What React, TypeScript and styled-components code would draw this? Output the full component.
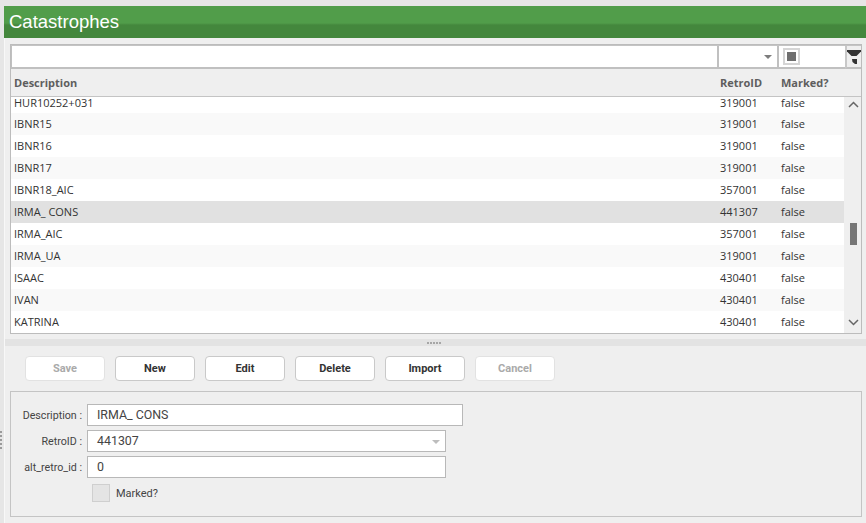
import React from "react";
import styled, { createGlobalStyle } from "styled-components";

const Global = createGlobalStyle`
  html, body { margin: 0; padding: 0; background: #e6e6e6; width: 866px; height: 523px; overflow: hidden; }
  * { box-sizing: border-box; }
`;
const Page = styled.div`
  width: 866px; height: 523px; padding: 6px 0 0 4px; display: flex; flex-direction: column; background: #e6e6e6; position: relative;
`;
const Title = styled.h1`
  margin: 0; height: 32px; flex: none; padding: 0 0 0 5px; color: #fff;
  font: 400 18.5px/31px "Liberation Sans", Arial, sans-serif;
  background: linear-gradient(#519d4a 0, #519d4a 17px, #44873d 19px, #44873d 100%);
`;
const Body = styled.div`
  flex: 1; display: flex; flex-direction: column; background: #efefef; border-left: 1px solid #f8f8f8;
`;
const GridWrap = styled.div`
  margin: 6px 4px 0 5px; height: 290px; flex: none; border: 1px solid #bcbcbc; background: #efefef; display: flex; flex-direction: column;
`;
const FilterRow = styled.div`
  display: grid; grid-template-columns: 708px 60px 66px 16px; height: 24px; flex: none; background: #fff;
  border-top: 1px solid #c4c4c4;
`;
const FilterCell = styled.div<{ $plain?: boolean }>`
  position: relative; background: #fff; display: flex; align-items: center;
  border-bottom: 2px solid #c0c0c0;
  border-right: ${p => p.$plain ? "none" : "2px solid #c0c0c0"};
  &:first-child { border-left: 1px solid #c0c0c0; }
`;
const FilterBtn = styled.div`
  background: #efefef; border-bottom: 2px solid #c0c0c0; border-left: 2px solid #c8c8c8; display: flex; justify-content: flex-start; align-items: flex-start; padding: 4px 0 0 0;
`;
const Caret = styled.span<{ $light?: boolean }>`
  position: absolute; right: 5px; top: 9px; width: 0; height: 0;
  border-left: 4px solid transparent; border-right: 4px solid transparent;
  border-top: 4px solid ${p => p.$light ? "#bdbdbd" : "#7d7d7d"};
`;
const TriBox = styled.span`
  width: 17px; height: 17px; margin: 0 0 0 4px; border: 2px solid #d5d5d5; background: #fff; display: flex; align-items: center; justify-content: center;
  &::after { content: ""; width: 9px; height: 9px; background: #6f6f6f; }
`;
const cols = "grid-template-columns: 706px 61px 1fr;";
const HeadRow = styled.div`
  display: grid; ${cols} height: 28px; flex: none; align-items: center; background: #efefef; border-bottom: 1px solid #c4c4c4;
`;
const HeadCell = styled.div`
  font: 700 11px "Open Sans", sans-serif; color: #5e5e5e; padding-left: 3px;
`;
const ListArea = styled.div`
  flex: 1; display: flex; min-height: 0;
`;
const Rows = styled.div`
  width: 833px; overflow: hidden; background: #fff;
`;
const Row = styled.div<{ $sel?: boolean; $alt?: boolean; $h?: number }>`
  display: grid; ${cols} height: ${p => p.$h ?? 22}px; align-items: ${p => p.$h ? "start" : "center"};
  line-height: ${p => p.$h ? 12 : 14}px;
  background: ${p => p.$sel ? "#e1e1e1" : p.$alt ? "#f9f9f9" : "#fff"};
`;
const Cell = styled.div`
  font: 400 11px "Open Sans", sans-serif; line-height: inherit; color: #333; padding-left: 3px; white-space: nowrap;
`;
const Track = styled.div`
  flex: 1; background: #efefef; display: flex; flex-direction: column; align-items: center; padding: 4px 0 0 1px;
`;
const Thumb = styled.div`
  width: 7px; height: 22px; background: #767676; margin-top: 115px; margin-bottom: 74px;
`;
const Splitter = styled.div`
  margin-top: 5px; height: 7px; flex: none; background: #e3e3e3; display: flex; justify-content: center; align-items: center; gap: 1px; padding-right: 3px;
`;
const Dot = styled.i`
  width: 2px; height: 2px; background: #a6a6a6; display: block;
`;
const Toolbar = styled.div`
  display: flex; gap: 10px; padding: 10px 0 0 20px; height: 45px; flex: none;
`;
const Btn = styled.button<{ $off?: boolean }>`
  width: 80px; height: 25px; border-radius: 4px; padding: 0; background: #fff;
  border: 1px solid ${p => p.$off ? "#e2e2e2" : "#c9c9c9"};
  color: ${p => p.$off ? "#aaa" : "#333"};
  font: 700 11px Roboto, sans-serif;
`;
const Form = styled.div`
  margin: 0 4px 0 5px; height: 126px; flex: none; border: 1px solid #c4c4c4; padding: 12px 0 0 0; display: flex; flex-direction: column; gap: 4px;
`;
const FormRow = styled.div`
  display: flex; align-items: center; height: 22px;
`;
const Label = styled.label`
  width: 71px; margin-right: 5px; text-align: right; font: 400 10.7px Roboto, sans-serif; color: #444; white-space: nowrap;
`;
const Field = styled.div<{ $w: number }>`
  width: ${p => p.$w}px; height: 22px; background: #fff; border: 1px solid #b8b8b8; position: relative;
  padding-left: 9px; font: 400 12.4px/20px Roboto, sans-serif; color: #444;
`;
const CheckRow = styled.div`
  display: flex; align-items: center; gap: 6px; padding-left: 81px; margin-top: 2px;
`;
const Check = styled.span`
  width: 18px; height: 18px; background: #e4e4e4; border: 1px solid #cfcfcf; display: block;
`;
const CheckLabel = styled.span`
  font: 400 11px Roboto, sans-serif; color: #444;
`;
const SideGrip = styled.div`
  position: absolute; left: 0; top: 431px; width: 2px; height: 20px;
  background: repeating-linear-gradient(#9a9a9a 0, #9a9a9a 2px, transparent 2px, transparent 4px);
`;

const data: [string, string][] = [
  ["IBNR15", "319001"], ["IBNR16", "319001"], ["IBNR17", "319001"], ["IBNR18_AIC", "357001"],
  ["IRMA_ CONS", "441307"], ["IRMA_AIC", "357001"], ["IRMA_UA", "319001"],
  ["ISAAC", "430401"], ["IVAN", "430401"], ["KATRINA", "430401"],
];

const Chevron = ({ up }: { up?: boolean }) => (
  <svg width="11" height="7" viewBox="0 0 11 7" fill="none" stroke="#666" strokeWidth="1.5">
    <path d={up ? "M1 6 L5.5 1.5 L10 6" : "M1 1 L5.5 5.5 L10 1"} />
  </svg>
);

const Funnel = () => (
  <svg width="14" height="15" viewBox="0 0 14 15">
    <path d="M0 0 H14 V1.5 L9.5 6 H4.5 L0 1.5 Z" fill="#333" />
    <path d="M5 9 H10 V14 H8 L5.5 12 Z" fill="#333" />
  </svg>
);

export default function App() {
  return (
    <>
      <Global />
      <Page>
        <Title>Catastrophes</Title>
        <Body>
          <GridWrap>
            <FilterRow>
              <FilterCell />
              <FilterCell><Caret /></FilterCell>
              <FilterCell $plain><TriBox /></FilterCell>
              <FilterBtn><Funnel /></FilterBtn>
            </FilterRow>
            <HeadRow>
              <HeadCell>Description</HeadCell>
              <HeadCell>RetroID</HeadCell>
              <HeadCell>Marked?</HeadCell>
            </HeadRow>
            <ListArea>
              <Rows>
                <Row $h={16}>
                  <Cell>HUR10252+031</Cell><Cell>319001</Cell><Cell>false</Cell>
                </Row>
                {data.map(([d, r], i) => (
                  <Row key={d} $sel={d === "IRMA_ CONS"} $alt={i % 2 === 0}>
                    <Cell>{d}</Cell><Cell>{r}</Cell><Cell>false</Cell>
                  </Row>
                ))}
              </Rows>
              <Track>
                <Chevron up />
                <Thumb />
                <Chevron />
              </Track>
            </ListArea>
          </GridWrap>
          <Splitter><Dot /><Dot /><Dot /><Dot /><Dot /></Splitter>
          <Toolbar>
            <Btn $off>Save</Btn>
            <Btn>New</Btn>
            <Btn>Edit</Btn>
            <Btn>Delete</Btn>
            <Btn>Import</Btn>
            <Btn $off>Cancel</Btn>
          </Toolbar>
          <Form>
            <FormRow><Label>Description :</Label><Field $w={376}>IRMA_ CONS</Field></FormRow>
            <FormRow><Label>RetroID :</Label><Field $w={359}>441307<Caret $light /></Field></FormRow>
            <FormRow><Label>alt_retro_id :</Label><Field $w={359}>0</Field></FormRow>
            <CheckRow><Check /><CheckLabel>Marked?</CheckLabel></CheckRow>
          </Form>
        </Body>
        <SideGrip />
      </Page>
    </>
  );
}
